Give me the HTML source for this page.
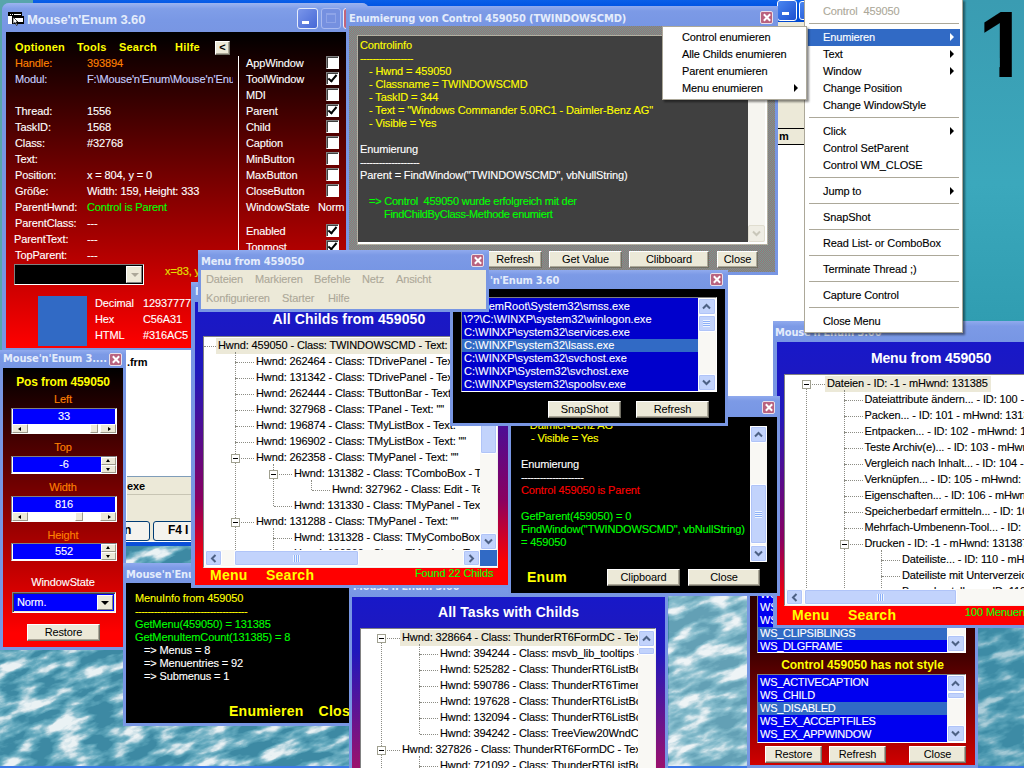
<!DOCTYPE html>
<html><head><meta charset="utf-8"><title>Mouse'n'Enum 3.60</title>
<style>
*{box-sizing:border-box;margin:0;padding:0}
html,body{width:1024px;height:768px;overflow:hidden;background:#4f9fb8}
body{position:relative;font-family:"Liberation Sans",sans-serif;font-size:11px;color:#fff;line-height:13px;letter-spacing:-0.12px}
.a{position:absolute}
.win{position:absolute;background:#7896e3;overflow:hidden}
.tb{position:absolute;left:0;top:0;right:0;background:linear-gradient(#90aaee 0,#7c9ae6 25%,#7796e4 100%);color:#e4ecfb;font-family:"DejaVu Sans Condensed","Liberation Sans",sans-serif;font-weight:bold;font-size:11px;white-space:nowrap;overflow:hidden}
.tb span{position:absolute;left:4px;top:3px}
.cl{position:absolute;overflow:hidden}
.x{position:absolute;width:13px;height:13px;border:1px solid #e9e0ea;border-radius:2px;background:#b9637f}
.x svg{position:absolute;left:0;top:0}
.t{position:absolute;white-space:pre;-webkit-text-stroke:.12px}
.y{color:#ff0}.g{color:#0f0}.o{color:#ff8000}.r{color:#f00}
.btn{position:absolute;background:#ece9d8;color:#000;text-align:center;border:1px solid;border-color:#fff #716f64 #716f64 #fff;box-shadow:inset -1px -1px 0 #aca899;font-size:11px;line-height:14px;height:17px}
.bold{font-weight:bold;-webkit-text-stroke:0}
.cb{position:absolute;width:13px;height:13px;background:#fff;border:1px solid;border-color:#808080 #fff #fff #808080;box-shadow:inset 1px 1px 0 #404040}
.tree{position:absolute;background:#fff;color:#000;overflow:hidden;border:1px solid;border-color:#828282 #f0f0ea #f0f0ea #828282}
.tree .t{line-height:15px;height:16px}
.hl{background:#ece9d8}
.pm{position:absolute;width:9px;height:9px;border:1px solid #a0a090;background:#fff}
.pm:after{content:"";position:absolute;left:1px;top:3px;width:5px;height:1px;background:#000}
.dh{position:absolute;height:0;border-top:1px dotted #8c8c84}
.dv{position:absolute;width:0;border-left:1px dotted #8c8c84}
.sb{position:absolute;background:#f9f8f4}
.sbb{position:absolute;background:#c2d3fc;border:1px solid #fff;border-radius:2px;box-shadow:inset 0 0 0 1px #b0c4f8}
.menu{position:absolute;z-index:50;background:#fff;border:1px solid #aca899;color:#000;font-size:11px;box-shadow:2px 2px 2px rgba(0,0,0,.45)}
.menu .t{line-height:17px}
.sep{position:absolute;height:1px;background:#aca899}
.arr{position:absolute;width:0;height:0;border:4px solid transparent;border-left-color:#000;border-right:0}
.lb{position:absolute;overflow:hidden;border:1px solid;border-color:#808080 #fff #fff #808080}
.lb .t{left:2px;letter-spacing:inherit}
.sel{position:absolute;left:0;background:#316ac5;height:13px}

.ck:after{content:"";position:absolute;left:3px;top:0;width:3px;height:7px;border:solid #000;border-width:0 2px 2px 0;transform:rotate(40deg)}
.x:before,.x:after{content:"";position:absolute;left:5px;top:1px;width:2px;height:9px;background:#fff;transform:rotate(45deg)}
.x:after{transform:rotate(-45deg)}
.hs{background:#fff;border-left:14px solid #ece9d8;border-right:14px solid #ece9d8}
.hs i{position:absolute;top:0;height:8px;background:#ece9d8;border:1px solid;border-color:#fff #808080 #808080 #fff}
.spin{width:14px;height:13px;background:#ece9d8;border:1px solid;border-color:#fff #808080 #808080 #fff}
.big{font-size:14px;letter-spacing:.25px}
.ls{letter-spacing:.2px}
.tbx{background:#fff;border:1px solid;border-color:#808080 #fff #fff #808080}
.sbtn{background:#ece9d8;border:1px solid;border-color:#fff #9d9a8c #9d9a8c #fff}
.dith{background:#8a8080 repeating-conic-gradient(#70a090 0 25%,#9c6c78 0 50%) 0 0/2px 2px}
.ttl{font-size:14px}
</style></head><body>
<!-- DESKTOP -->
<svg class="a" style="left:0;top:0" width="1024" height="768">
<defs>
<filter id="wf" x="0" y="0" width="100%" height="100%" color-interpolation-filters="sRGB">
<feTurbulence type="fractalNoise" baseFrequency="0.03 0.075" numOctaves="4" seed="11"/>
<feColorMatrix type="matrix" values="2.8 0 0 0 -1.0  2.8 0 0 0 -1.0  2.8 0 0 0 -1.0  0 0 0 0 1"/>
<feComponentTransfer><feFuncR type="table" tableValues="0.24 0.32 0.40 0.55 0.78 0.92"/><feFuncG type="table" tableValues="0.54 0.61 0.67 0.75 0.87 0.95"/><feFuncB type="table" tableValues="0.64 0.70 0.75 0.81 0.90 0.96"/></feComponentTransfer>
</filter>
<linearGradient id="sky" x1="0" y1="0" x2="0" y2="1"><stop offset="0" stop-color="#3a9cb2"/><stop offset="0.55" stop-color="#3ba8bc"/><stop offset="1" stop-color="#2f9cb0"/></linearGradient>
</defs>
<rect width="1024" height="768" fill="#d5e6ec"/>
<g transform="rotate(-18 512 600)"><rect x="-200" y="200" width="1500" height="900" filter="url(#wf)"/></g>
<rect x="669" y="596" width="78" height="172" fill="#fff" opacity=".2"/><rect x="978" y="626" width="46" height="142" fill="#3f90aa" opacity=".35"/>
<rect x="0" y="0" width="1024" height="335" fill="url(#sky)"/>
<rect x="0" y="0" width="40" height="352" fill="#58a5ab"/>
<rect x="0" y="766" width="1024" height="2" fill="#3c78e8"/>
</svg>
<div class="t" style="left:978px;top:-2px;font:bold 94px/94px 'Liberation Sans',sans-serif;color:#000;letter-spacing:0;clip-path:polygon(0 0,33.8px 0,33.8px 100%,21.4px 100%,21.4px 60px,0 60px)">1</div>

<!-- WINDOWS COMMANDER (background window) -->
<div class="a" id="wc" style="left:33px;top:0;width:790px;height:546px;background:#fff">
 <div class="a" style="left:0;top:0;width:100%;height:22px;background:linear-gradient(#0a5fe8,#0054e3 30%,#0048d0)"></div>
 <div class="a" style="left:744px;top:0px;width:20px;height:21px;border:1px solid #fff;border-radius:3px;background:linear-gradient(135deg,#4a86f0,#1c4fd0)"><div class="a" style="left:4px;top:11px;width:7px;height:3px;background:#fff"></div></div>
 <div class="a" style="left:766px;top:1px;width:19px;height:19px;border:1px solid #fff;border-radius:3px;background:linear-gradient(135deg,#4a86f0,#1c4fd0)"></div>
 <!-- right visible strip -->
 <div class="a" style="left:745px;top:22px;width:30px;height:106px;background:#ece9d8"></div>
 <div class="a" style="left:745px;top:128px;width:30px;height:1px;background:#000"></div>
 <div class="a" style="left:745px;top:129px;width:30px;height:15px;background:#ece9d8"></div>
 <div class="a" style="left:745px;top:144px;width:30px;height:1px;background:#000"></div>
 <div class="t bold" style="left:746px;top:130px;color:#000">m</div>
 <!-- left visible strip -->
 <div class="t bold" style="left:94px;top:356px;color:#000">.frm</div>
 <div class="a" style="left:94px;top:476px;width:70px;height:19px;background:#ece9d8;border-top:1px solid #7f9db9;border-bottom:1px solid #c8c5b4"></div>
 <div class="t bold" style="left:94px;top:480px;color:#000">exe</div>
 <div class="a" style="left:94px;top:495px;width:70px;height:46px;background:#ece9d8"></div>
 <div class="a" style="left:60px;top:521px;width:57px;height:20px;background:#f4f3ee;border:1px solid #003c74;border-radius:3px"></div><div class="t bold" style="left:91px;top:524px;color:#000;font-size:12px">n</div>
 <div class="a" style="left:120px;top:521px;width:80px;height:20px;background:#f4f3ee;border:1px solid #003c74;border-radius:3px"></div>
 <div class="t bold" style="left:135px;top:524px;color:#000;font-size:12px">F4 I</div>
 <div class="a" style="left:0;top:542px;width:100%;height:3.5px;background:#0a50d8"></div>
</div>
<!-- MAIN WINDOW A -->
<div class="win" id="wA" style="left:2px;top:3px;width:367px;height:347px;border-radius:7px 7px 0 0">
 <div class="tb" style="height:29px;background:linear-gradient(#9cb4f0 0,#809ee8 20%,#7998e5 60%,#7896e3 100%)">
  <svg class="a" style="left:6px;top:9px" width="17" height="15" viewBox="0 0 17 15"><rect x="0" y="0" width="14" height="4" fill="#000"/><rect x="2" y="2" width="1" height="1" fill="#fff"/><rect x="4" y="2" width="1" height="1" fill="#fff"/><rect x="6" y="2" width="7" height="1" fill="#fff"/><rect x="0" y="4" width="4" height="8" fill="#fff"/><rect x="4" y="4" width="12" height="8" fill="#000"/><rect x="6" y="6" width="9" height="4" fill="#fff"/><path d="M5 5 L5 12 L7 10.5 L8.5 13.5 L9.5 13 L8 10 L10 10 Z" fill="#fff" stroke="#000" stroke-width=".7"/></svg>
  <span style="left:25px;top:9px;font:bold 13px 'Liberation Sans',sans-serif">Mouse'n'Enum 3.60</span>
  <div class="a" style="left:295px;top:5px;width:21px;height:21px;border:1px solid #e6ecfb;border-radius:3px;background:linear-gradient(135deg,#7a96ea,#4668d6)"><div class="a" style="left:4px;top:12px;width:7px;height:3px;background:#fff"></div></div>
  <div class="a" style="left:319px;top:5px;width:20px;height:21px;border:1px solid #a9baf0;border-radius:3px;background:#7590e0"><div class="a" style="left:4px;top:4px;width:10px;height:10px;border:1px solid #8ea4e8;border-top-width:2px"></div></div>
  <div class="a" style="left:341px;top:5px;width:21px;height:21px;border:1px solid #e6ecfb;border-radius:3px;background:#c0647c"></div>
 </div>
 <div class="cl" style="left:4px;top:29px;width:360px;height:316px;background:linear-gradient(#000,#ff0000)">
  <div class="t y bold ls" style="left:9px;top:9px">Optionen</div>
  <div class="t y bold ls" style="left:71px;top:9px">Tools</div>
  <div class="t y bold ls" style="left:113px;top:9px">Search</div>
  <div class="t y bold ls" style="left:169px;top:9px">Hilfe</div>
  <div class="btn bold" style="left:209px;top:9px;width:15px;height:14px;line-height:11px">&lt;</div>
  <div class="a" style="left:232px;top:24px;width:1px;height:210px;background:#fff"></div>
  <div class="t o" style="left:9px;top:25px">Handle:</div><div class="t o" style="left:81px;top:25px">393894</div>
  <div class="t" style="left:9px;top:41px;color:#c8d0ff">Modul:</div><div class="t" style="left:81px;top:41px;color:#c8d0ff;width:146px;overflow:hidden">F:\Mouse'n'Enum\Mouse'n'Enum</div>
  <div class="t" style="left:9px;top:73px">Thread:</div><div class="t" style="left:81px;top:73px">1556</div>
  <div class="t" style="left:9px;top:89px">TaskID:</div><div class="t" style="left:81px;top:89px">1568</div>
  <div class="t" style="left:9px;top:105px">Class:</div><div class="t" style="left:81px;top:105px">#32768</div>
  <div class="t" style="left:9px;top:121px">Text:</div>
  <div class="t" style="left:9px;top:137px">Position:</div><div class="t" style="left:81px;top:137px">x = 804, y = 0</div>
  <div class="t" style="left:9px;top:153px">Größe:</div><div class="t" style="left:81px;top:153px">Width: 159, Height: 333</div>
  <div class="t" style="left:9px;top:169px">ParentHwnd:</div><div class="t g" style="left:81px;top:169px">Control is Parent</div>
  <div class="t" style="left:9px;top:185px">ParentClass:</div><div class="t" style="left:81px;top:185px">---</div>
  <div class="t" style="left:8px;top:201px">ParentText:</div><div class="t" style="left:81px;top:201px">---</div>
  <div class="t" style="left:9px;top:217px">TopParent:</div><div class="t" style="left:81px;top:217px">---</div>
  <div class="t" style="left:240px;top:25px">AppWindow</div><div class="cb" style="left:320px;top:24px"></div>
  <div class="t" style="left:240px;top:41px">ToolWindow</div><div class="cb ck" style="left:320px;top:40px"></div>
  <div class="t" style="left:240px;top:57px">MDI</div><div class="cb" style="left:320px;top:56px"></div>
  <div class="t" style="left:240px;top:73px">Parent</div><div class="cb ck" style="left:320px;top:72px"></div>
  <div class="t" style="left:240px;top:89px">Child</div><div class="cb" style="left:320px;top:88px"></div>
  <div class="t" style="left:240px;top:105px">Caption</div><div class="cb" style="left:320px;top:104px"></div>
  <div class="t" style="left:240px;top:121px">MinButton</div><div class="cb" style="left:320px;top:120px"></div>
  <div class="t" style="left:240px;top:137px">MaxButton</div><div class="cb" style="left:320px;top:136px"></div>
  <div class="t" style="left:240px;top:153px">CloseButton</div><div class="cb" style="left:320px;top:152px"></div>
  <div class="t" style="left:240px;top:169px">WindowState</div><div class="t" style="left:312px;top:169px">Norm</div>
  <div class="t" style="left:240px;top:193px">Enabled</div><div class="cb ck" style="left:320px;top:192px"></div>
  <div class="t" style="left:240px;top:209px">Topmost</div><div class="cb ck" style="left:320px;top:208px"></div>
  <div class="a" style="left:8px;top:232px;width:130px;height:21px;background:#000;border:1px solid;border-color:#808080 #fff #fff #808080"><div class="a" style="right:1px;top:1px;width:16px;height:17px;background:#ece9d8;border:1px solid;border-color:#fff #808080 #808080 #fff"><div class="a" style="left:4px;top:6px;border:4px solid transparent;border-top-color:#aca899;border-bottom:0"></div></div></div>
  <div class="t" style="left:159px;top:233px;color:#e4e000">x=83, y=12</div>
  <div class="a" style="left:32px;top:264px;width:49px;height:50px;background:#316ac5"></div>
  <div class="t" style="left:89px;top:265px">Decimal</div><div class="t" style="left:137px;top:265px">12937777</div>
  <div class="t" style="left:89px;top:281px">Hex</div><div class="t" style="left:137px;top:281px">C56A31</div>
  <div class="t" style="left:89px;top:297px">HTML</div><div class="t" style="left:137px;top:297px">#316AC5</div>
 </div>
</div>

<!-- POS WINDOW I -->
<div class="win" id="wI" style="left:0;top:350px;width:126px;height:300px">
 <div class="tb" style="height:18px"><span style="left:3px;top:2px">Mouse'n'Enum 3....</span>
  <div class="x" style="left:109px;top:3px"></div></div>
 <div class="cl" style="left:3px;top:18px;width:120px;height:279px;background:linear-gradient(#000,#ff0000 95%)">
  <div class="t y bold" style="left:0;width:120px;text-align:center;top:8px;font-size:12px">Pos from 459050</div>
  <div class="t o" style="left:0;width:120px;text-align:center;top:25px">Left</div>
  <div class="a tbx" style="left:8px;top:40px;width:106px;height:26px"></div>
  <div class="a" style="left:10px;top:41px;width:102px;height:15px;background:#0000ff"></div>
  <div class="t" style="left:10px;width:102px;text-align:center;top:42px">33</div>
  <div class="a" style="left:9px;top:56px;width:104px;height:9px;background:#fff"><div class="a sbtn" style="left:0;top:0;width:16px;height:9px"><div class="a" style="left:5px;top:2px;border:2.5px solid transparent;border-right:3px solid #000;border-left:0"></div></div><div class="a sbtn" style="left:88px;top:0;width:16px;height:9px"><div class="a" style="left:7px;top:2px;border:2.5px solid transparent;border-left:3px solid #000;border-right:0"></div></div><div class="a sbtn" style="left:78px;top:0;width:8px;height:9px"></div></div>
  <div class="t o" style="left:0;width:120px;text-align:center;top:73px">Top</div>
  <div class="a tbx" style="left:8px;top:88px;width:106px;height:18px"></div>
  <div class="a" style="left:10px;top:89px;width:88px;height:15px;background:#0000ff"></div>
  <div class="t" style="left:10px;width:102px;text-align:center;top:90px">-6</div>
  <div class="a sbtn" style="left:98px;top:89px;width:15px;height:8px"><div class="a" style="left:4px;top:1px;border:2.5px solid transparent;border-bottom:3px solid #000;border-top:0"></div></div><div class="a sbtn" style="left:98px;top:97px;width:15px;height:8px"><div class="a" style="left:4px;top:2px;border:2.5px solid transparent;border-top:3px solid #000;border-bottom:0"></div></div>
  <div class="t o" style="left:0;width:120px;text-align:center;top:113px">Width</div>
  <div class="a tbx" style="left:8px;top:128px;width:106px;height:26px"></div>
  <div class="a" style="left:10px;top:129px;width:102px;height:15px;background:#0000ff"></div>
  <div class="t" style="left:10px;width:102px;text-align:center;top:130px">816</div>
  <div class="a" style="left:9px;top:144px;width:104px;height:9px;background:#fff"><div class="a sbtn" style="left:0;top:0;width:16px;height:9px"><div class="a" style="left:5px;top:2px;border:2.5px solid transparent;border-right:3px solid #000;border-left:0"></div></div><div class="a sbtn" style="left:88px;top:0;width:16px;height:9px"><div class="a" style="left:7px;top:2px;border:2.5px solid transparent;border-left:3px solid #000;border-right:0"></div></div><div class="a sbtn" style="left:63px;top:0;width:8px;height:9px"></div></div>
  <div class="t o" style="left:0;width:120px;text-align:center;top:161px">Height</div>
  <div class="a tbx" style="left:8px;top:175px;width:106px;height:18px"></div>
  <div class="a" style="left:10px;top:176px;width:88px;height:15px;background:#0000ff"></div>
  <div class="t" style="left:10px;width:102px;text-align:center;top:177px">552</div>
  <div class="a sbtn" style="left:98px;top:176px;width:15px;height:8px"><div class="a" style="left:4px;top:1px;border:2.5px solid transparent;border-bottom:3px solid #000;border-top:0"></div></div><div class="a sbtn" style="left:98px;top:184px;width:15px;height:8px"><div class="a" style="left:4px;top:2px;border:2.5px solid transparent;border-top:3px solid #000;border-bottom:0"></div></div>
  <div class="t" style="left:0;width:120px;text-align:center;top:208px">WindowState</div>
  <div class="a" style="left:9px;top:224px;width:104px;height:21px;background:#0000ff;border:1px solid;border-color:#808080 #fff #fff #808080;box-shadow:inset 1px 1px 0 #404040,inset -1px -1px 0 #ece9d8"><div class="t" style="left:4px;top:3px">Norm.</div><div class="a" style="right:2px;top:2px;width:16px;height:15px;background:#ece9d8;border:1px solid;border-color:#fff #808080 #808080 #fff"><div class="a" style="left:3px;top:5px;border:4px solid transparent;border-top-color:#000;border-bottom:0"></div></div></div>
  <div class="btn" style="left:24px;top:256px;width:73px;height:17px">Restore</div>
 </div>
</div>

<!-- STYLE WINDOW M -->
<div class="win" id="wM" style="left:747px;top:560px;width:231px;height:208px">
 <div class="cl" style="left:3px;top:3px;width:225px;height:202px;background:linear-gradient(#200000 0,#400000 45%,#d00000 100%)">
  <div class="lb" style="left:7px;top:23px;width:209px;height:67px;background:#0000f0;letter-spacing:-0.25px"><div class="t" style="top:1px">WS_BORDER</div><div class="t" style="top:14px">WS_CAPTION</div><div class="t" style="top:27px">WS_CLIPCHILDREN</div><div class="sel" style="top:40px;width:189px"></div><div class="t" style="top:40px">WS_CLIPSIBLINGS</div><div class="t" style="top:53px">WS_DLGFRAME</div><div class="sb" style="left:189px;top:0px;width:18px;height:65px"><div class="sbb" style="left:0;top:0;width:18px;height:17px"><svg class="a" style="left:3px;top:4px" width="9" height="7"><path d="M1 5.5 L4.5 2 L8 5.5" fill="none" stroke="#4d6185" stroke-width="2"/></svg></div><div class="sbb" style="left:0;top:48px;width:18px;height:17px"><svg class="a" style="left:3px;top:4px" width="9" height="7"><path d="M1 1.5 L4.5 5 L8 1.5" fill="none" stroke="#4d6185" stroke-width="2"/></svg></div></div></div>
  <div class="t y bold" style="left:0;width:225px;text-align:center;top:96px;font-size:12px;letter-spacing:0">Control 459050 has not style</div>
  <div class="lb" style="left:7px;top:111px;width:209px;height:69px;background:#0000f0;letter-spacing:-0.25px"><div class="t" style="top:1px">WS_ACTIVECAPTION</div><div class="t" style="top:14px">WS_CHILD</div><div class="sel" style="top:27px;width:189px"></div><div class="t" style="top:27px">WS_DISABLED</div><div class="t" style="top:40px">WS_EX_ACCEPTFILES</div><div class="t" style="top:53px">WS_EX_APPWINDOW</div><div class="sb" style="left:189px;top:0px;width:18px;height:67px"><div class="sbb" style="left:0;top:0;width:18px;height:17px"><svg class="a" style="left:3px;top:4px" width="9" height="7"><path d="M1 5.5 L4.5 2 L8 5.5" fill="none" stroke="#4d6185" stroke-width="2"/></svg></div><div class="sbb" style="left:0;top:50px;width:18px;height:17px"><svg class="a" style="left:3px;top:4px" width="9" height="7"><path d="M1 1.5 L4.5 5 L8 1.5" fill="none" stroke="#4d6185" stroke-width="2"/></svg></div><div class="sbb" style="left:0;top:17px;width:18px;height:7px"></div></div></div>
  <div class="btn" style="left:15px;top:183px;width:57px">Restore</div>
  <div class="btn" style="left:79px;top:183px;width:57px">Refresh</div>
  <div class="btn" style="left:159px;top:183px;width:57px">Close</div>
 </div>
</div>
<!-- MENUINFO WINDOW J -->
<div class="win" id="wJ" style="left:123px;top:563px;width:240px;height:163px">
 <div class="tb" style="height:20px"><span style="left:3px;top:5px">Mouse'n'Enum 3.60</span></div>
 <div class="cl" style="left:3px;top:20px;width:234px;height:140px;background:#000">
  <div class="t y" style="left:9px;top:9px">MenuInfo from 459050</div>
  <div class="t y" style="letter-spacing:-0.55px;left:9px;top:22px">------------------------------------</div>
  <div class="t g" style="left:9px;top:35px">GetMenu(459050) = 131385</div>
  <div class="t g" style="left:9px;top:48px">GetMenuItemCount(131385) = 8</div>
  <div class="t" style="left:18px;top:61px">=&gt; Menus = 8</div>
  <div class="t" style="left:18px;top:74px">=&gt; Menuentries = 92</div>
  <div class="t" style="left:18px;top:87px">=&gt; Submenus = 1</div>
  <div class="t y bold big" style="left:103px;top:122px">Enumieren</div>
  <div class="t y bold big" style="left:192.5px;top:122px;letter-spacing:.3px">Close</div>
 </div>
</div>

<!-- ALL TASKS WINDOW K -->
<div class="win" id="wK" style="left:349px;top:580px;width:319px;height:200px">
 <div class="tb" style="height:17px"><span style="left:4px;top:0px">Mouse'n'Enum 3.60</span></div>
 <div class="cl" style="left:3px;top:17px;width:313px;height:183px;background:linear-gradient(#1818c8 0,#2018bc 30%,#a81064 100%)">
  <div class="t bold ttl" style="left:0;width:313px;text-align:center;top:9px;letter-spacing:.1px">All Tasks with Childs</div>
  <div class="tree" style="left:8px;top:31px;width:296px;height:160px"><div class="t hl" style="left:39px;top:1px;padding:0 3px 0 2px">Hwnd: 328664 - Class: ThunderRT6FormDC - Text: ""</div>
<div class="dh" style="left:26px;top:9px;width:13px"></div>
<div class="pm" style="left:16px;top:5px"></div>
<div class="t" style="left:77px;top:17px;padding:0 3px 0 2px">Hwnd: 394244 - Class: msvb_lib_tooltips - Text: ""</div>
<div class="dh" style="left:59px;top:25px;width:18px"></div>
<div class="t" style="left:77px;top:33px;padding:0 3px 0 2px">Hwnd: 525282 - Class: ThunderRT6ListBox - Text: ""</div>
<div class="dh" style="left:59px;top:41px;width:18px"></div>
<div class="t" style="left:77px;top:49px;padding:0 3px 0 2px">Hwnd: 590786 - Class: ThunderRT6Timer - Text: ""</div>
<div class="dh" style="left:59px;top:57px;width:18px"></div>
<div class="t" style="left:77px;top:65px;padding:0 3px 0 2px">Hwnd: 197628 - Class: ThunderRT6ListBox - Text: ""</div>
<div class="dh" style="left:59px;top:73px;width:18px"></div>
<div class="t" style="left:77px;top:81px;padding:0 3px 0 2px">Hwnd: 132094 - Class: ThunderRT6ListBox - Text: ""</div>
<div class="dh" style="left:59px;top:89px;width:18px"></div>
<div class="t" style="left:77px;top:97px;padding:0 3px 0 2px">Hwnd: 394242 - Class: TreeView20WndClass - Text: ""</div>
<div class="dh" style="left:59px;top:105px;width:18px"></div>
<div class="t" style="left:39px;top:113px;padding:0 3px 0 2px">Hwnd: 327826 - Class: ThunderRT6FormDC - Text: ""</div>
<div class="dh" style="left:26px;top:121px;width:13px"></div>
<div class="pm" style="left:16px;top:117px"></div>
<div class="t" style="left:77px;top:129px;padding:0 3px 0 2px">Hwnd: 721092 - Class: ThunderRT6ListBox - Text: ""</div>
<div class="dh" style="left:59px;top:137px;width:18px"></div>
<div class="dv" style="left:58px;top:15px;height:10px"></div>
<div class="dv" style="left:58px;top:25px;height:16px"></div>
<div class="dv" style="left:58px;top:41px;height:16px"></div>
<div class="dv" style="left:58px;top:57px;height:16px"></div>
<div class="dv" style="left:58px;top:73px;height:16px"></div>
<div class="dv" style="left:58px;top:89px;height:16px"></div>
<div class="dv" style="left:20px;top:14px;height:103px"></div>
<div class="dv" style="left:58px;top:127px;height:10px"></div>
<div class="dv" style="left:20px;top:126px;height:39px"></div>
<div class="dv" style="left:58px;top:137px;height:28px"></div>
   <div class="sb" style="left:277px;top:1px;width:17px;height:160px"><div class="sbb" style="left:0;top:0;width:17px;height:17px"><svg class="a" style="left:3px;top:4px" width="9" height="7"><path d="M1 5.5 L4.5 2 L8 5.5" fill="none" stroke="#4d6185" stroke-width="2"/></svg></div><div class="sbb" style="left:0;top:143px;width:17px;height:17px"><svg class="a" style="left:3px;top:4px" width="9" height="7"><path d="M1 1.5 L4.5 5 L8 1.5" fill="none" stroke="#4d6185" stroke-width="2"/></svg></div><div class="sbb" style="left:0;top:17px;width:17px;height:8px"></div></div>
  </div>
 </div>
</div>
<!-- MENU TREE WINDOW L -->
<div class="win" id="wL" style="left:773px;top:321px;width:330px;height:307px">
 <div class="tb" style="height:21px"><span style="left:2px;top:5px">Mouse'n'Enum 3.60</span></div>
 <div class="cl" style="left:4px;top:21px;width:323px;height:283px;background:linear-gradient(#1818c8 0,#2018bc 25%,#8a0060 70%,#ff0000 92%)">
  <div class="t bold ttl" style="left:0;width:308px;text-align:center;top:10px">Menu from 459050</div>
  <div class="tree" style="left:7px;top:32px;width:300px;height:232px"><div class="t hl" style="left:40.0px;top:1px;padding:0 3px 0 2px">Dateien - ID: -1 - mHwnd: 131385</div>
<div class="dh" style="left:27.0px;top:9px;width:13px"></div>
<div class="pm" style="left:17.0px;top:5px"></div>
<div class="t" style="left:77.5px;top:17px;padding:0 3px 0 2px">Dateiattribute ändern... - ID: 100 - mHwnd: 131386</div>
<div class="dh" style="left:59.5px;top:25px;width:18.0px"></div>
<div class="t" style="left:77.5px;top:33px;padding:0 3px 0 2px">Packen... - ID: 101 - mHwnd: 131386</div>
<div class="dh" style="left:59.5px;top:41px;width:18.0px"></div>
<div class="t" style="left:77.5px;top:49px;padding:0 3px 0 2px">Entpacken... - ID: 102 - mHwnd: 131386</div>
<div class="dh" style="left:59.5px;top:57px;width:18.0px"></div>
<div class="t" style="left:77.5px;top:65px;padding:0 3px 0 2px">Teste Archiv(e)... - ID: 103 - mHwnd: 131386</div>
<div class="dh" style="left:59.5px;top:73px;width:18.0px"></div>
<div class="t" style="left:77.5px;top:81px;padding:0 3px 0 2px">Vergleich nach Inhalt... - ID: 104 - mHwnd: 131386</div>
<div class="dh" style="left:59.5px;top:89px;width:18.0px"></div>
<div class="t" style="left:77.5px;top:97px;padding:0 3px 0 2px">Verknüpfen... - ID: 105 - mHwnd: 131386</div>
<div class="dh" style="left:59.5px;top:105px;width:18.0px"></div>
<div class="t" style="left:77.5px;top:113px;padding:0 3px 0 2px">Eigenschaften... - ID: 106 - mHwnd: 131386</div>
<div class="dh" style="left:59.5px;top:121px;width:18.0px"></div>
<div class="t" style="left:77.5px;top:129px;padding:0 3px 0 2px">Speicherbedarf ermitteln... - ID: 107 - mHwnd: 131386</div>
<div class="dh" style="left:59.5px;top:137px;width:18.0px"></div>
<div class="t" style="left:77.5px;top:145px;padding:0 3px 0 2px">Mehrfach-Umbenenn-Tool... - ID: 108 - mHwnd: 131386</div>
<div class="dh" style="left:59.5px;top:153px;width:18.0px"></div>
<div class="t" style="left:77.5px;top:161px;padding:0 3px 0 2px">Drucken - ID: -1 - mHwnd: 131387</div>
<div class="dh" style="left:64.5px;top:169px;width:13px"></div>
<div class="pm" style="left:54.5px;top:165px"></div>
<div class="t" style="left:115.0px;top:177px;padding:0 3px 0 2px">Dateiliste... - ID: 110 - mHwnd: 131387</div>
<div class="dh" style="left:97.0px;top:185px;width:18.0px"></div>
<div class="t" style="left:115.0px;top:193px;padding:0 3px 0 2px">Dateiliste mit Unterverzeichnissen... - ID: 111</div>
<div class="dh" style="left:97.0px;top:201px;width:18.0px"></div>
<div class="t" style="left:115.0px;top:209px;padding:0 3px 0 2px">Baumdarstellung - ID: 112 - mHwnd: 131387</div>
<div class="dh" style="left:97.0px;top:217px;width:18.0px"></div>
<div class="dv" style="left:58.5px;top:15px;height:10px"></div>
<div class="dv" style="left:58.5px;top:25px;height:16px"></div>
<div class="dv" style="left:58.5px;top:41px;height:16px"></div>
<div class="dv" style="left:58.5px;top:57px;height:16px"></div>
<div class="dv" style="left:58.5px;top:73px;height:16px"></div>
<div class="dv" style="left:58.5px;top:89px;height:16px"></div>
<div class="dv" style="left:58.5px;top:105px;height:16px"></div>
<div class="dv" style="left:58.5px;top:121px;height:16px"></div>
<div class="dv" style="left:58.5px;top:137px;height:16px"></div>
<div class="dv" style="left:58.5px;top:153px;height:12px"></div>
<div class="dv" style="left:96.0px;top:175px;height:10px"></div>
<div class="dv" style="left:96.0px;top:185px;height:16px"></div>
<div class="dv" style="left:96.0px;top:201px;height:16px"></div>
<div class="dv" style="left:21.0px;top:14px;height:231px"></div>
<div class="dv" style="left:58.5px;top:174px;height:71px"></div>
<div class="dv" style="left:96.0px;top:217px;height:28px"></div>
   <div class="sb" style="left:1px;top:214px;width:280px;height:16px"><div class="sbb" style="left:0;top:0;width:17px;height:16px"><svg class="a" style="left:4px;top:3px" width="7" height="9"><path d="M5.5 1 L2 4.5 L5.5 8" fill="none" stroke="#4d6185" stroke-width="2"/></svg></div><div class="sbb" style="left:263px;top:0;width:17px;height:16px"><svg class="a" style="left:4px;top:3px" width="7" height="9"><path d="M1.5 1 L5 4.5 L1.5 8" fill="none" stroke="#4d6185" stroke-width="2"/></svg></div><div class="sbb" style="left:18px;top:0;width:153px;height:16px"><div class="a" style="left:72px;top:4px;width:7px;height:7px;background:repeating-linear-gradient(90deg,#eef4fe 0 1px,#8cb0f8 1px 2px)"></div></div></div>
  </div>
  <div class="a" style="left:0;top:264px;width:323px;height:19px;background:#ff0000"></div>
  <div class="t y bold big" style="left:15px;top:267px">Menu</div>
  <div class="t y bold big" style="left:71px;top:267px">Search</div>
  <div class="t g" style="left:188px;top:264px">100 Menuentries</div>
 </div>
</div>
<!-- ALL CHILDS WINDOW F -->
<div class="win" id="wF" style="left:191px;top:282px;width:330px;height:306px">
 <div class="tb" style="height:20px"><span style="left:4px;top:3px">Mouse'n'Enum 3.60</span></div>
 <div class="cl" style="left:4px;top:20px;width:323px;height:283px;background:linear-gradient(#1818c8 0,#2018bc 25%,#8a0060 70%,#ff0000 92%)">
  <div class="t bold ttl" style="left:0;width:308px;text-align:center;top:11px;letter-spacing:.12px">All Childs from 459050</div>
  <div class="tree" style="left:8px;top:34px;width:295px;height:232px"><div class="t hl" style="left:12px;top:1px;padding:0 3px 0 2px">Hwnd: 459050 - Class: TWINDOWSCMD - Text: "Windows Commander 5.0RC1"</div>
<div class="dh" style="left:0px;top:9px;width:12px"></div>
<div class="t" style="left:50px;top:17px;padding:0 3px 0 2px">Hwnd: 262464 - Class: TDrivePanel - Text: ""</div>
<div class="dh" style="left:32px;top:25px;width:18px"></div>
<div class="t" style="left:50px;top:33px;padding:0 3px 0 2px">Hwnd: 131342 - Class: TDrivePanel - Text: ""</div>
<div class="dh" style="left:32px;top:41px;width:18px"></div>
<div class="t" style="left:50px;top:49px;padding:0 3px 0 2px">Hwnd: 262444 - Class: TButtonBar - Text: ""</div>
<div class="dh" style="left:32px;top:57px;width:18px"></div>
<div class="t" style="left:50px;top:65px;padding:0 3px 0 2px">Hwnd: 327968 - Class: TPanel - Text: ""</div>
<div class="dh" style="left:32px;top:73px;width:18px"></div>
<div class="t" style="left:50px;top:81px;padding:0 3px 0 2px">Hwnd: 196874 - Class: TMyListBox - Text: ""</div>
<div class="dh" style="left:32px;top:89px;width:18px"></div>
<div class="t" style="left:50px;top:97px;padding:0 3px 0 2px">Hwnd: 196902 - Class: TMyListBox - Text: ""</div>
<div class="dh" style="left:32px;top:105px;width:18px"></div>
<div class="t" style="left:50px;top:113px;padding:0 3px 0 2px">Hwnd: 262358 - Class: TMyPanel - Text: ""</div>
<div class="dh" style="left:37px;top:121px;width:13px"></div>
<div class="pm" style="left:27px;top:117px"></div>
<div class="t" style="left:88px;top:129px;padding:0 3px 0 2px">Hwnd: 131382 - Class: TComboBox - Text: ""</div>
<div class="dh" style="left:75px;top:137px;width:13px"></div>
<div class="pm" style="left:65px;top:133px"></div>
<div class="t" style="left:126px;top:145px;padding:0 3px 0 2px">Hwnd: 327962 - Class: Edit - Text: ""</div>
<div class="dh" style="left:108px;top:153px;width:18px"></div>
<div class="t" style="left:88px;top:161px;padding:0 3px 0 2px">Hwnd: 131330 - Class: TMyPanel - Text: ""</div>
<div class="dh" style="left:70px;top:169px;width:18px"></div>
<div class="t" style="left:50px;top:177px;padding:0 3px 0 2px">Hwnd: 131288 - Class: TMyPanel - Text: ""</div>
<div class="dh" style="left:37px;top:185px;width:13px"></div>
<div class="pm" style="left:27px;top:181px"></div>
<div class="t" style="left:88px;top:193px;padding:0 3px 0 2px">Hwnd: 131328 - Class: TMyComboBox - Text: ""</div>
<div class="dh" style="left:70px;top:201px;width:18px"></div>
<div class="t" style="left:88px;top:209px;padding:0 3px 0 2px">Hwnd: 196866 - Class: TMyPanel - Text: ""</div>
<div class="dh" style="left:70px;top:217px;width:18px"></div>
<div class="dv" style="left:31px;top:15px;height:10px"></div>
<div class="dv" style="left:31px;top:25px;height:16px"></div>
<div class="dv" style="left:31px;top:41px;height:16px"></div>
<div class="dv" style="left:31px;top:57px;height:16px"></div>
<div class="dv" style="left:31px;top:73px;height:16px"></div>
<div class="dv" style="left:31px;top:89px;height:16px"></div>
<div class="dv" style="left:31px;top:105px;height:12px"></div>
<div class="dv" style="left:69px;top:127px;height:6px"></div>
<div class="dv" style="left:107px;top:143px;height:10px"></div>
<div class="dv" style="left:69px;top:142px;height:27px"></div>
<div class="dv" style="left:31px;top:126px;height:55px"></div>
<div class="dv" style="left:69px;top:191px;height:10px"></div>
<div class="dv" style="left:69px;top:201px;height:16px"></div>
<div class="dv" style="left:31px;top:190px;height:55px"></div>
<div class="dv" style="left:69px;top:217px;height:28px"></div>
   <div class="sb" style="left:276px;top:1px;width:17px;height:212px"><div class="sbb" style="left:0;top:0;width:17px;height:17px"><svg class="a" style="left:3px;top:4px" width="9" height="7"><path d="M1 5.5 L4.5 2 L8 5.5" fill="none" stroke="#4d6185" stroke-width="2"/></svg></div><div class="sbb" style="left:0;top:195px;width:17px;height:17px"><svg class="a" style="left:3px;top:4px" width="9" height="7"><path d="M1 1.5 L4.5 5 L8 1.5" fill="none" stroke="#4d6185" stroke-width="2"/></svg></div><div class="sbb" style="left:0;top:40px;width:17px;height:76px"><div class="a" style="left:4px;top:34px;width:7px;height:7px;background:repeating-linear-gradient(#eef4fe 0 1px,#8cb0f8 1px 2px)"></div></div></div>
   <div class="sb" style="left:1px;top:213px;width:275px;height:16px"><div class="sbb" style="left:0;top:0;width:17px;height:16px"><svg class="a" style="left:4px;top:3px" width="7" height="9"><path d="M5.5 1 L2 4.5 L5.5 8" fill="none" stroke="#4d6185" stroke-width="2"/></svg></div><div class="sbb" style="left:258px;top:0;width:17px;height:16px"><svg class="a" style="left:4px;top:3px" width="7" height="9"><path d="M1.5 1 L5 4.5 L1.5 8" fill="none" stroke="#4d6185" stroke-width="2"/></svg></div><div class="sbb" style="left:29px;top:0;width:125px;height:16px"><div class="a" style="left:58px;top:4px;width:7px;height:7px;background:repeating-linear-gradient(90deg,#eef4fe 0 1px,#8cb0f8 1px 2px)"></div></div></div>
   <div class="a" style="left:276px;top:213px;width:17px;height:16px;background:#316ac5"></div>
  </div>
  <div class="a" style="left:0;top:266px;width:323px;height:17px;background:#ff0000"></div>
  <div class="t y bold big" style="left:15px;top:267px">Menu</div>
  <div class="t y bold big" style="left:71px;top:267px">Search</div>
  <div class="t g" style="left:220px;top:265px">Found 22 Childs</div>
 </div>
</div>
<!-- PARENT ENUM WINDOW H -->
<div class="win" id="wH" style="left:508px;top:396px;width:272px;height:200px">
 <div class="tb" style="height:20px"><span style="left:4px;top:3px">Mouse'n'Enum 3.60</span><div class="x" style="left:254px;top:5px"></div></div>
 <div class="cl" style="left:3px;top:21px;width:266px;height:176px;background:#000">
  <div class="t y" style="left:10px;top:2px">   Daimler-Benz AG"</div>
  <div class="t y" style="left:20px;top:15px">- Visible = Yes</div>
  <div class="t" style="left:10px;top:41px">Enumierung</div>
  <div class="t" style="letter-spacing:-0.55px;left:10px;top:54px">--------------------</div>
  <div class="t r" style="left:10px;top:67px">Control 459050 is Parent</div>
  <div class="t g" style="left:10px;top:93px">GetParent(459050) = 0</div>
  <div class="t g" style="left:10px;top:106px">FindWindow("TWINDOWSCMD", vbNullString)</div>
  <div class="t g" style="left:10px;top:119px">= 459050</div>
  <div class="sb" style="left:239px;top:9px;width:17px;height:136px"><div class="sbb" style="left:0;top:0;width:17px;height:17px"><svg class="a" style="left:3px;top:4px" width="9" height="7"><path d="M1 5.5 L4.5 2 L8 5.5" fill="none" stroke="#4d6185" stroke-width="2"/></svg></div><div class="sbb" style="left:0;top:119px;width:17px;height:17px"><svg class="a" style="left:3px;top:4px" width="9" height="7"><path d="M1 1.5 L4.5 5 L8 1.5" fill="none" stroke="#4d6185" stroke-width="2"/></svg></div><div class="sbb" style="left:0;top:58px;width:17px;height:60px"><div class="a" style="left:4px;top:26px;width:7px;height:7px;background:repeating-linear-gradient(#eef4fe 0 1px,#8cb0f8 1px 2px)"></div></div></div>
  <div class="t y bold big" style="left:16px;top:154px">Enum</div>
  <div class="btn" style="left:96px;top:152px;width:73px">Clipboard</div>
  <div class="btn" style="left:177px;top:152px;width:72px">Close</div>
 </div>
</div>
<!-- ENUMIERUNG WINDOW B -->
<div class="win" id="wB" style="left:346px;top:6px;width:432px;height:269px">
 <div class="tb" style="height:20px"><span style="left:3px;top:6px">Enumierung von Control 459050 (TWINDOWSCMD)</span><div class="x" style="left:414px;top:5px"></div></div>
 <div class="cl dith" style="left:3px;top:20px;width:426px;height:246px">
  <div class="a" style="left:8px;top:9px;width:411px;height:210px;background:#fff;border:1px solid #b4b1a3"></div>
  <div class="a" style="left:9px;top:10px;width:390px;height:206px;background:#404040"></div>
  <div class="t y" style="left:11px;top:13px">Controlinfo</div>
  <div class="t y" style="letter-spacing:-0.55px;left:11px;top:26px">-----------------</div>
  <div class="t y" style="left:20px;top:39px">- Hwnd = 459050</div>
  <div class="t y" style="left:20px;top:52px">- Classname = TWINDOWSCMD</div>
  <div class="t y" style="left:20px;top:65px">- TaskID = 344</div>
  <div class="t y" style="left:20px;top:78px">- Text = "Windows Commander 5.0RC1 - Daimler-Benz AG"</div>
  <div class="t y" style="left:20px;top:91px">- Visible = Yes</div>
  <div class="t" style="left:11px;top:117px">Enumierung</div>
  <div class="t" style="letter-spacing:-0.55px;left:11px;top:130px">-------------------</div>
  <div class="t" style="left:11px;top:143px">Parent = FindWindow("TWINDOWSCMD", vbNullString)</div>
  <div class="t g" style="left:20px;top:169px;letter-spacing:-.24px">=&gt; Control  459050 wurde erfolgreich mit der</div>
  <div class="t g" style="left:35px;top:182px;letter-spacing:-.32px">FindChildByClass-Methode enumiert</div>
  <div class="sb" style="left:399px;top:10px;width:17px;height:206px;background:#f6f5f0"><div class="a" style="left:0;top:189px;width:17px;height:17px;border:1px solid #e0ddd0;border-radius:2px;background:#efede4"><svg class="a" style="left:3px;top:4px" width="9" height="7"><path d="M1 1.5 L4.5 5 L8 1.5" fill="none" stroke="#c9c7ba" stroke-width="2"/></svg></div></div>
  <div class="btn" style="left:139px;top:225px;width:54px">Refresh</div>
  <div class="btn" style="left:200px;top:225px;width:73px">Get Value</div>
  <div class="btn" style="left:280px;top:225px;width:80px">Clibboard</div>
  <div class="btn" style="left:368px;top:225px;width:41px">Close</div>
 </div>
</div>
<!-- LIST WINDOW G -->
<div class="win" id="wG" style="left:450px;top:270px;width:278px;height:156px">
 <div class="tb" style="height:19px"><span style="left:4px;top:4px;letter-spacing:-.6px">Mouse</span><span style="left:40px;top:4px;letter-spacing:-.25px">'n'Enum 3.60</span><div class="x" style="left:260px;top:3px"></div></div>
 <div class="cl" style="left:3px;top:19px;width:272px;height:134px;background:#000">
  <div class="lb" style="left:8px;top:8px;width:256px;height:95px;background:#0000cc;letter-spacing:0.05px"><div class="t" style="top:2px">\SystemRoot\System32\smss.exe</div><div class="t" style="top:15px">\??\C:\WINXP\system32\winlogon.exe</div><div class="t" style="top:28px">C:\WINXP\system32\services.exe</div><div class="sel" style="top:41px;width:236px"></div><div class="t" style="top:41px">C:\WINXP\system32\lsass.exe</div><div class="t" style="top:54px">C:\WINXP\system32\svchost.exe</div><div class="t" style="top:67px">C:\WINXP\System32\svchost.exe</div><div class="t" style="top:80px">C:\WINXP\system32\spoolsv.exe</div><div class="sb" style="left:236px;top:0px;width:18px;height:93px"><div class="sbb" style="left:0;top:0;width:18px;height:17px"><svg class="a" style="left:3px;top:4px" width="9" height="7"><path d="M1 5.5 L4.5 2 L8 5.5" fill="none" stroke="#4d6185" stroke-width="2"/></svg></div><div class="sbb" style="left:0;top:76px;width:18px;height:17px"><svg class="a" style="left:3px;top:4px" width="9" height="7"><path d="M1 1.5 L4.5 5 L8 1.5" fill="none" stroke="#4d6185" stroke-width="2"/></svg></div><div class="sbb" style="left:0;top:17px;width:18px;height:17px"><div class="a" style="left:4px;top:4px;width:7px;height:7px;background:repeating-linear-gradient(#eef4fe 0 1px,#8cb0f8 1px 2px)"></div></div></div></div>
  <div class="btn" style="left:95px;top:112px;width:73px">SnapShot</div>
  <div class="btn" style="left:183px;top:112px;width:73px">Refresh</div>
 </div>
</div>
<!-- MENU WINDOW E -->
<div class="win" id="wE" style="left:198px;top:250px;width:291px;height:62px">
 <div class="tb" style="height:20px"><span style="left:3px;top:5px">Menu from 459050</span><div class="x" style="left:273px;top:4px"></div></div>
 <div class="cl mb" style="left:3px;top:20px;width:285px;height:39px;background:#ece9d8;color:#aca899">
  <div class="t" style="left:5px;top:3px">Dateien</div><div class="t" style="left:54px;top:3px">Markieren</div><div class="t" style="left:113px;top:3px">Befehle</div><div class="t" style="left:161px;top:3px">Netz</div><div class="t" style="left:195px;top:3px">Ansicht</div>
  <div class="t" style="left:5px;top:22px">Konfigurieren</div><div class="t" style="left:81px;top:22px">Starter</div><div class="t" style="left:127px;top:22px">Hilfe</div>
 </div>
</div>
<!-- CONTEXT MENUS -->
<div class="menu" id="m1" style="left:804px;top:-1px;width:159px;height:334px"><div class="t" style="left:18px;top:3px;color:#aca899">Control  459050</div><div class="a" style="left:3px;top:29px;width:152px;height:17px;background:#316ac5"></div><div class="t" style="left:18px;top:29px;color:#fff">Enumieren</div><div class="arr" style="left:145px;top:33px;border-left-color:#fff"></div><div class="t" style="left:18px;top:46px;color:#000">Text</div><div class="arr" style="left:145px;top:50px;"></div><div class="t" style="left:18px;top:63px;color:#000">Window</div><div class="arr" style="left:145px;top:67px;"></div><div class="t" style="left:18px;top:80px;color:#000">Change Position</div><div class="t" style="left:18px;top:97px;color:#000">Change WindowStyle</div><div class="t" style="left:18px;top:123px;color:#000">Click</div><div class="arr" style="left:145px;top:127px;"></div><div class="t" style="left:18px;top:140px;color:#000">Control SetParent</div><div class="t" style="left:18px;top:157px;color:#000">Control WM_CLOSE</div><div class="t" style="left:18px;top:183px;color:#000">Jump to</div><div class="arr" style="left:145px;top:187px;"></div><div class="t" style="left:18px;top:209px;color:#000">SnapShot</div><div class="t" style="left:18px;top:235px;color:#000">Read List- or ComboBox</div><div class="t" style="left:18px;top:261px;color:#000">Terminate Thread ;)</div><div class="t" style="left:18px;top:287px;color:#000">Capture Control</div><div class="t" style="left:18px;top:313px;color:#000">Close Menu</div><div class="sep" style="left:4px;top:23px;width:150px"></div><div class="sep" style="left:4px;top:117px;width:150px"></div><div class="sep" style="left:4px;top:177px;width:150px"></div><div class="sep" style="left:4px;top:203px;width:150px"></div><div class="sep" style="left:4px;top:229px;width:150px"></div><div class="sep" style="left:4px;top:255px;width:150px"></div><div class="sep" style="left:4px;top:281px;width:150px"></div><div class="sep" style="left:4px;top:307px;width:150px"></div></div>
<div class="menu" id="m2" style="left:662px;top:26px;width:145px;height:74px"><div class="t" style="left:19px;top:2px">Control enumieren</div><div class="t" style="left:19px;top:19px">Alle Childs enumieren</div><div class="t" style="left:19px;top:36px">Parent enumieren</div><div class="t" style="left:19px;top:53px">Menu enumieren</div><div class="arr" style="left:131px;top:57px"></div></div>
</body></html>
